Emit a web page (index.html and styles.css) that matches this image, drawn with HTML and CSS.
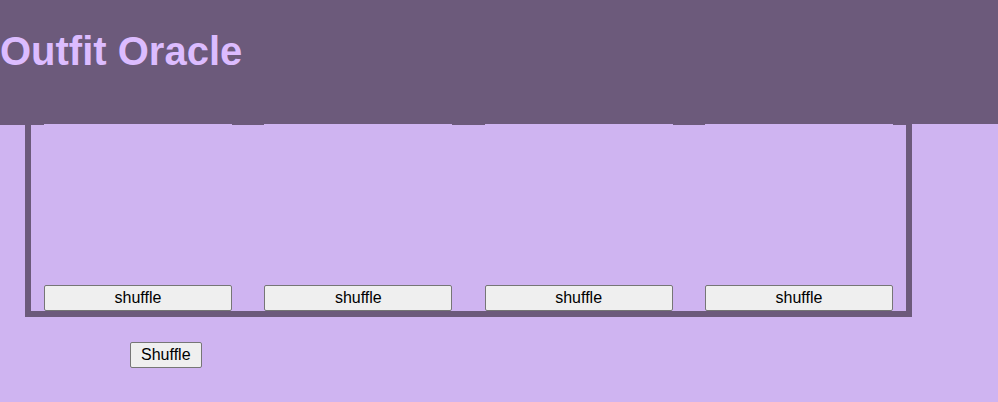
FILE: index.html
```html
<!DOCTYPE html>
<html lang="en">
<head>
<meta charset="utf-8">
<title>Outfit Oracle</title>
<link rel="stylesheet" href="styles.css">
</head>
<body>
<header class="site-header">
  <h1 class="title">Outfit Oracle</h1>
</header>
<main class="stage">
  <section class="board">
    <div class="slot"><button class="btn btn-slot">shuffle</button></div>
    <div class="slot"><button class="btn btn-slot">shuffle</button></div>
    <div class="slot"><button class="btn btn-slot">shuffle</button></div>
    <div class="slot"><button class="btn btn-slot">shuffle</button></div>
  </section>
</main>
<div class="actions">
  <button class="btn btn-main">Shuffle</button>
</div>
</body>
</html>
```
FILE: styles.css
```css
:root {
  --dark: #6c5a7b;
  --bg: #cfb4f1;
  --title: #dcbcff;
}
html, body {
  margin: 0;
  padding: 0;
}
body {
  background: var(--bg);
  font-family: "Liberation Sans", Arial, sans-serif;
  color: #000;
}
.site-header {
  background: var(--dark);
  height: 124px;
  box-sizing: border-box;
  padding-top: 28px;
}
.title {
  margin: 0;
  font-size: 40px;
  font-weight: bold;
  line-height: 46px;
  color: var(--title);
}
.stage {
  width: 912px;
  box-shadow: inset 0 1px 0 var(--dark);
}
.board {
  margin-left: 25px;
  width: 887px;
  box-sizing: border-box;
  border: 6px solid var(--dark);
  border-top: 0;
  padding: 0 13px;
  display: flex;
  justify-content: space-between;
}
.slot {
  background: var(--bg);
  width: 188px;
  height: 187px;
  display: flex;
  flex-direction: column;
  justify-content: flex-end;
}
.btn {
  font-family: "Liberation Sans", Arial, sans-serif;
  font-size: 16px;
  line-height: 18px;
  color: #000;
  background: #efefef;
  border: 1px solid #767676;
  border-radius: 2px;
}
.btn-slot {
  width: 188px;
  height: 26px;
  padding: 0;
}
.actions {
  padding: 25px 0 0 130px;
}
.btn-main {
  height: 26px;
  padding: 0 10px;
}
```
